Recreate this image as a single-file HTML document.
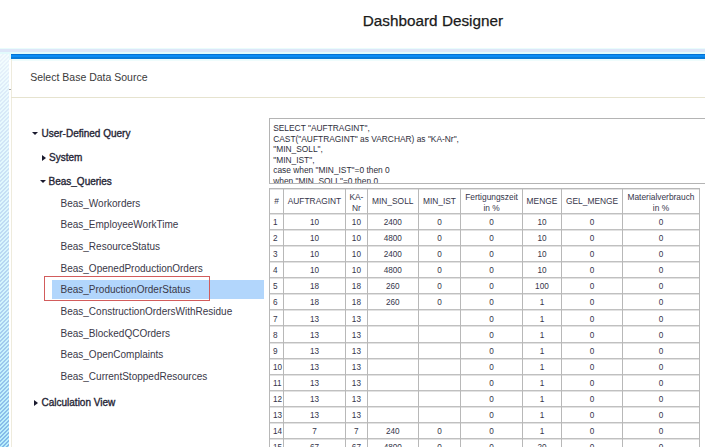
<!DOCTYPE html><html><head><meta charset="utf-8"><style>
*{margin:0;padding:0;box-sizing:border-box}
html,body{width:705px;height:447px;overflow:hidden;background:#fff;font-family:"Liberation Sans",sans-serif;position:relative}
.a{position:absolute;white-space:nowrap}
.title{left:362.8px;top:13px;font-size:15.3px;line-height:15px;color:#1a1a1a;-webkit-text-stroke:0.25px #1a1a1a}
.hatch{position:absolute;background-color:#a0e8f8;background-image:linear-gradient(rgba(255,255,255,0.88) 0%,rgba(255,255,255,0.78) 10%,rgba(255,255,255,0.5) 63%,rgba(255,255,255,0.22) 100%),repeating-linear-gradient(135deg,#a4eafa 0px,#a4eafa 1.6px,#5ea4e2 1.6px,#5ea4e2 2.83px)}
.htop{position:absolute;left:0;top:48px;width:705px;height:6px;background:linear-gradient(#e9fcfc 0,#e9fcfc 1.5px,#dde6f8 1.5px,#dde6f8 4.5px,#e2fafc 4.5px)}
.bar{position:absolute;left:11px;top:54px;width:694px;height:5px;background:linear-gradient(#0672d2 0,#0672d2 1px,#0a8cf6 1px,#0a8cf6 3.5px,#0a7ad8 3.5px)}
.bbelow{position:absolute;left:11px;top:59px;width:694px;height:2px;background:#eefcfc}
.vline{position:absolute;left:11px;top:59px;width:1px;height:388px;background:#eeebdd}
.hline{position:absolute;left:11px;top:97px;width:694px;height:1px;background:#e6e3cf}
.hdr{left:30.2px;top:71px;font-size:10.5px;line-height:12px;color:#3a3a3a}
.t{font-size:10px;line-height:12px;color:#3a3848}
.tb{font-size:10px;line-height:12px;color:#262636;-webkit-text-stroke:0.35px #262636}
.sel{position:absolute;left:52px;top:280px;width:212px;height:19px;background:#b2d6fc}
.red{position:absolute;left:44px;top:276px;width:166px;height:25px;border:1px solid #d25c5c}
.tri-d{position:absolute;width:0;height:0;border-left:3px solid transparent;border-right:3px solid transparent;border-top:3.5px solid #1a1a2e}
.tri-r{position:absolute;width:0;height:0;border-top:3px solid transparent;border-bottom:3px solid transparent;border-left:4px solid #1a1a2e}
.ta{position:absolute;left:269px;top:118px;width:460px;height:66px;border:1px solid #b4b4b4;overflow:hidden;background:#fff}
.ta div{position:absolute;left:3.2px;font-size:8.4px;line-height:10px;color:#2e2e3a;white-space:nowrap}
.cell{position:absolute;font-size:8.2px;line-height:9px;color:#35354a;text-align:center;white-space:nowrap}
.vl{position:absolute;width:1px;background:#b8b8b8}
.hl{position:absolute;height:1px;background:#c0c0c0;box-shadow:0 1px 0 #e2e2e2}
</style></head><body>
<div class="a title">Dashboard Designer</div>
<div class="htop"></div>
<div class="hatch" style="left:0;top:54px;width:9px;height:393px"></div>
<div style="position:absolute;left:9px;top:54px;width:2px;height:6px;background:#e8fafc"></div>
<div class="bar"></div><div class="bbelow"></div><div class="vline"></div><div class="hline"></div>
<div style="position:absolute;left:9px;top:89px;width:2px;height:1px;background:#aaa"></div>
<div class="a hdr">Select Base Data Source</div>
<div class="sel"></div>
<div class="tri-d" style="left:32px;top:131.5px"></div>
<div class="a tb" style="left:41.5px;top:127.5px">User-Defined Query</div>
<div class="tri-r" style="left:41.5px;top:155px"></div>
<div class="a tb" style="left:49px;top:151.5px">System</div>
<div class="tri-d" style="left:40px;top:179.5px"></div>
<div class="a tb" style="left:48.5px;top:175.5px">Beas_Queries</div>
<div class="a t" style="left:60.5px;top:197.50px">Beas_Workorders</div>
<div class="a t" style="left:60.5px;top:219.17px">Beas_EmployeeWorkTime</div>
<div class="a t" style="left:60.5px;top:240.84px">Beas_ResourceStatus</div>
<div class="a t" style="left:60.5px;top:262.51px">Beas_OpenedProductionOrders</div>
<div class="a t" style="left:60.5px;top:284.18px">Beas_ProductionOrderStatus</div>
<div class="a t" style="left:60.5px;top:305.85px">Beas_ConstructionOrdersWithResidue</div>
<div class="a t" style="left:60.5px;top:327.52px">Beas_BlockedQCOrders</div>
<div class="a t" style="left:60.5px;top:349.19px">Beas_OpenComplaints</div>
<div class="a t" style="left:60.5px;top:370.86px">Beas_CurrentStoppedResources</div>
<div class="red"></div>
<div class="tri-r" style="left:33.5px;top:399.5px"></div>
<div class="a tb" style="left:41.5px;top:396.5px">Calculation View</div>
<div class="ta">
<div style="top:4.00px">SELECT &quot;AUFTRAGINT&quot;,</div>
<div style="top:14.50px">CAST(&quot;AUFTRAGINT&quot; as VARCHAR) as &quot;KA-Nr&quot;,</div>
<div style="top:25.00px">&quot;MIN_SOLL&quot;,</div>
<div style="top:35.50px">&quot;MIN_IST&quot;,</div>
<div style="top:46.00px">case when &quot;MIN_IST&quot;=0 then 0</div>
<div style="top:56.50px">when &quot;MIN_SOLL&quot;=0 then 0</div>
</div>
<div style="position:absolute;left:269.5px;top:188.0px;width:429.8px;height:259.0px;background:#fff"></div>
<div class="hl" style="left:269.5px;top:187.5px;width:430.8px;background:#b8b8b8"></div>
<div class="hl" style="left:269px;top:213px;width:431px"></div>
<div class="hl" style="left:269px;top:229px;width:431px"></div>
<div class="hl" style="left:269px;top:245px;width:431px"></div>
<div class="hl" style="left:269px;top:261px;width:431px"></div>
<div class="hl" style="left:269px;top:277px;width:431px"></div>
<div class="hl" style="left:269px;top:293px;width:431px"></div>
<div class="hl" style="left:269px;top:309px;width:431px"></div>
<div class="hl" style="left:269px;top:325px;width:431px"></div>
<div class="hl" style="left:269px;top:342px;width:431px"></div>
<div class="hl" style="left:269px;top:358px;width:431px"></div>
<div class="hl" style="left:269px;top:374px;width:431px"></div>
<div class="hl" style="left:269px;top:390px;width:431px"></div>
<div class="hl" style="left:269px;top:406px;width:431px"></div>
<div class="hl" style="left:269px;top:422px;width:431px"></div>
<div class="hl" style="left:269px;top:438px;width:431px"></div>
<div class="hl" style="left:269px;top:454px;width:431px"></div>
<div class="vl" style="left:269px;top:188px;height:259px"></div>
<div class="vl" style="left:283px;top:188px;height:259px"></div>
<div class="vl" style="left:345px;top:188px;height:259px"></div>
<div class="vl" style="left:367px;top:188px;height:259px"></div>
<div class="vl" style="left:418px;top:188px;height:259px"></div>
<div class="vl" style="left:460px;top:188px;height:259px"></div>
<div class="vl" style="left:522px;top:188px;height:259px"></div>
<div class="vl" style="left:561px;top:188px;height:259px"></div>
<div class="vl" style="left:622px;top:188px;height:259px"></div>
<div class="vl" style="left:699px;top:188px;height:259px"></div>
<div class="cell" style="left:269.5px;width:14.0px;top:197.0px;font-size:8.4px">#</div>
<div class="cell" style="left:283.5px;width:62.0px;top:197.0px;font-size:8.4px">AUFTRAGINT</div>
<div class="cell" style="left:345.5px;width:21.8px;top:191.8px;line-height:10.7px;font-size:8.4px">KA-<br>Nr</div>
<div class="cell" style="left:367.3px;width:50.9px;top:197.0px;font-size:8.4px">MIN_SOLL</div>
<div class="cell" style="left:418.2px;width:42.5px;top:197.0px;font-size:8.4px">MIN_IST</div>
<div class="cell" style="left:460.7px;width:61.7px;top:191.8px;line-height:10.7px;font-size:8.4px">Fertigungszeit<br>in %</div>
<div class="cell" style="left:522.4px;width:39.1px;top:197.0px;font-size:8.4px">MENGE</div>
<div class="cell" style="left:561.5px;width:61.2px;top:197.0px;font-size:8.4px">GEL_MENGE</div>
<div class="cell" style="left:622.7px;width:76.6px;top:191.8px;line-height:10.7px;font-size:8.4px">Materialverbrauch<br>in %</div>
<div class="cell" style="left:273.0px;top:218.20px;text-align:left">1</div>
<div class="cell" style="left:283.5px;width:62.0px;top:218.20px">10</div>
<div class="cell" style="left:345.5px;width:21.8px;top:218.20px">10</div>
<div class="cell" style="left:367.3px;width:50.9px;top:218.20px">2400</div>
<div class="cell" style="left:418.2px;width:42.5px;top:218.20px">0</div>
<div class="cell" style="left:460.7px;width:61.7px;top:218.20px">0</div>
<div class="cell" style="left:522.4px;width:39.1px;top:218.20px">10</div>
<div class="cell" style="left:561.5px;width:61.2px;top:218.20px">0</div>
<div class="cell" style="left:622.7px;width:76.6px;top:218.20px">0</div>
<div class="cell" style="left:273.0px;top:234.25px;text-align:left">2</div>
<div class="cell" style="left:283.5px;width:62.0px;top:234.25px">10</div>
<div class="cell" style="left:345.5px;width:21.8px;top:234.25px">10</div>
<div class="cell" style="left:367.3px;width:50.9px;top:234.25px">4800</div>
<div class="cell" style="left:418.2px;width:42.5px;top:234.25px">0</div>
<div class="cell" style="left:460.7px;width:61.7px;top:234.25px">0</div>
<div class="cell" style="left:522.4px;width:39.1px;top:234.25px">10</div>
<div class="cell" style="left:561.5px;width:61.2px;top:234.25px">0</div>
<div class="cell" style="left:622.7px;width:76.6px;top:234.25px">0</div>
<div class="cell" style="left:273.0px;top:250.30px;text-align:left">3</div>
<div class="cell" style="left:283.5px;width:62.0px;top:250.30px">10</div>
<div class="cell" style="left:345.5px;width:21.8px;top:250.30px">10</div>
<div class="cell" style="left:367.3px;width:50.9px;top:250.30px">2400</div>
<div class="cell" style="left:418.2px;width:42.5px;top:250.30px">0</div>
<div class="cell" style="left:460.7px;width:61.7px;top:250.30px">0</div>
<div class="cell" style="left:522.4px;width:39.1px;top:250.30px">10</div>
<div class="cell" style="left:561.5px;width:61.2px;top:250.30px">0</div>
<div class="cell" style="left:622.7px;width:76.6px;top:250.30px">0</div>
<div class="cell" style="left:273.0px;top:266.35px;text-align:left">4</div>
<div class="cell" style="left:283.5px;width:62.0px;top:266.35px">10</div>
<div class="cell" style="left:345.5px;width:21.8px;top:266.35px">10</div>
<div class="cell" style="left:367.3px;width:50.9px;top:266.35px">4800</div>
<div class="cell" style="left:418.2px;width:42.5px;top:266.35px">0</div>
<div class="cell" style="left:460.7px;width:61.7px;top:266.35px">0</div>
<div class="cell" style="left:522.4px;width:39.1px;top:266.35px">10</div>
<div class="cell" style="left:561.5px;width:61.2px;top:266.35px">0</div>
<div class="cell" style="left:622.7px;width:76.6px;top:266.35px">0</div>
<div class="cell" style="left:273.0px;top:282.40px;text-align:left">5</div>
<div class="cell" style="left:283.5px;width:62.0px;top:282.40px">18</div>
<div class="cell" style="left:345.5px;width:21.8px;top:282.40px">18</div>
<div class="cell" style="left:367.3px;width:50.9px;top:282.40px">260</div>
<div class="cell" style="left:418.2px;width:42.5px;top:282.40px">0</div>
<div class="cell" style="left:460.7px;width:61.7px;top:282.40px">0</div>
<div class="cell" style="left:522.4px;width:39.1px;top:282.40px">100</div>
<div class="cell" style="left:561.5px;width:61.2px;top:282.40px">0</div>
<div class="cell" style="left:622.7px;width:76.6px;top:282.40px">0</div>
<div class="cell" style="left:273.0px;top:298.45px;text-align:left">6</div>
<div class="cell" style="left:283.5px;width:62.0px;top:298.45px">18</div>
<div class="cell" style="left:345.5px;width:21.8px;top:298.45px">18</div>
<div class="cell" style="left:367.3px;width:50.9px;top:298.45px">260</div>
<div class="cell" style="left:418.2px;width:42.5px;top:298.45px">0</div>
<div class="cell" style="left:460.7px;width:61.7px;top:298.45px">0</div>
<div class="cell" style="left:522.4px;width:39.1px;top:298.45px">1</div>
<div class="cell" style="left:561.5px;width:61.2px;top:298.45px">0</div>
<div class="cell" style="left:622.7px;width:76.6px;top:298.45px">0</div>
<div class="cell" style="left:273.0px;top:314.50px;text-align:left">7</div>
<div class="cell" style="left:283.5px;width:62.0px;top:314.50px">13</div>
<div class="cell" style="left:345.5px;width:21.8px;top:314.50px">13</div>
<div class="cell" style="left:367.3px;width:50.9px;top:314.50px"></div>
<div class="cell" style="left:418.2px;width:42.5px;top:314.50px"></div>
<div class="cell" style="left:460.7px;width:61.7px;top:314.50px">0</div>
<div class="cell" style="left:522.4px;width:39.1px;top:314.50px">1</div>
<div class="cell" style="left:561.5px;width:61.2px;top:314.50px">0</div>
<div class="cell" style="left:622.7px;width:76.6px;top:314.50px">0</div>
<div class="cell" style="left:273.0px;top:330.55px;text-align:left">8</div>
<div class="cell" style="left:283.5px;width:62.0px;top:330.55px">13</div>
<div class="cell" style="left:345.5px;width:21.8px;top:330.55px">13</div>
<div class="cell" style="left:367.3px;width:50.9px;top:330.55px"></div>
<div class="cell" style="left:418.2px;width:42.5px;top:330.55px"></div>
<div class="cell" style="left:460.7px;width:61.7px;top:330.55px">0</div>
<div class="cell" style="left:522.4px;width:39.1px;top:330.55px">1</div>
<div class="cell" style="left:561.5px;width:61.2px;top:330.55px">0</div>
<div class="cell" style="left:622.7px;width:76.6px;top:330.55px">0</div>
<div class="cell" style="left:273.0px;top:346.60px;text-align:left">9</div>
<div class="cell" style="left:283.5px;width:62.0px;top:346.60px">13</div>
<div class="cell" style="left:345.5px;width:21.8px;top:346.60px">13</div>
<div class="cell" style="left:367.3px;width:50.9px;top:346.60px"></div>
<div class="cell" style="left:418.2px;width:42.5px;top:346.60px"></div>
<div class="cell" style="left:460.7px;width:61.7px;top:346.60px">0</div>
<div class="cell" style="left:522.4px;width:39.1px;top:346.60px">1</div>
<div class="cell" style="left:561.5px;width:61.2px;top:346.60px">0</div>
<div class="cell" style="left:622.7px;width:76.6px;top:346.60px">0</div>
<div class="cell" style="left:273.0px;top:362.65px;text-align:left">10</div>
<div class="cell" style="left:283.5px;width:62.0px;top:362.65px">13</div>
<div class="cell" style="left:345.5px;width:21.8px;top:362.65px">13</div>
<div class="cell" style="left:367.3px;width:50.9px;top:362.65px"></div>
<div class="cell" style="left:418.2px;width:42.5px;top:362.65px"></div>
<div class="cell" style="left:460.7px;width:61.7px;top:362.65px">0</div>
<div class="cell" style="left:522.4px;width:39.1px;top:362.65px">1</div>
<div class="cell" style="left:561.5px;width:61.2px;top:362.65px">0</div>
<div class="cell" style="left:622.7px;width:76.6px;top:362.65px">0</div>
<div class="cell" style="left:273.0px;top:378.70px;text-align:left">11</div>
<div class="cell" style="left:283.5px;width:62.0px;top:378.70px">13</div>
<div class="cell" style="left:345.5px;width:21.8px;top:378.70px">13</div>
<div class="cell" style="left:367.3px;width:50.9px;top:378.70px"></div>
<div class="cell" style="left:418.2px;width:42.5px;top:378.70px"></div>
<div class="cell" style="left:460.7px;width:61.7px;top:378.70px">0</div>
<div class="cell" style="left:522.4px;width:39.1px;top:378.70px">1</div>
<div class="cell" style="left:561.5px;width:61.2px;top:378.70px">0</div>
<div class="cell" style="left:622.7px;width:76.6px;top:378.70px">0</div>
<div class="cell" style="left:273.0px;top:394.75px;text-align:left">12</div>
<div class="cell" style="left:283.5px;width:62.0px;top:394.75px">13</div>
<div class="cell" style="left:345.5px;width:21.8px;top:394.75px">13</div>
<div class="cell" style="left:367.3px;width:50.9px;top:394.75px"></div>
<div class="cell" style="left:418.2px;width:42.5px;top:394.75px"></div>
<div class="cell" style="left:460.7px;width:61.7px;top:394.75px">0</div>
<div class="cell" style="left:522.4px;width:39.1px;top:394.75px">1</div>
<div class="cell" style="left:561.5px;width:61.2px;top:394.75px">0</div>
<div class="cell" style="left:622.7px;width:76.6px;top:394.75px">0</div>
<div class="cell" style="left:273.0px;top:410.80px;text-align:left">13</div>
<div class="cell" style="left:283.5px;width:62.0px;top:410.80px">13</div>
<div class="cell" style="left:345.5px;width:21.8px;top:410.80px">13</div>
<div class="cell" style="left:367.3px;width:50.9px;top:410.80px"></div>
<div class="cell" style="left:418.2px;width:42.5px;top:410.80px"></div>
<div class="cell" style="left:460.7px;width:61.7px;top:410.80px">0</div>
<div class="cell" style="left:522.4px;width:39.1px;top:410.80px">1</div>
<div class="cell" style="left:561.5px;width:61.2px;top:410.80px">0</div>
<div class="cell" style="left:622.7px;width:76.6px;top:410.80px">0</div>
<div class="cell" style="left:273.0px;top:426.85px;text-align:left">14</div>
<div class="cell" style="left:283.5px;width:62.0px;top:426.85px">7</div>
<div class="cell" style="left:345.5px;width:21.8px;top:426.85px">7</div>
<div class="cell" style="left:367.3px;width:50.9px;top:426.85px">240</div>
<div class="cell" style="left:418.2px;width:42.5px;top:426.85px">0</div>
<div class="cell" style="left:460.7px;width:61.7px;top:426.85px">0</div>
<div class="cell" style="left:522.4px;width:39.1px;top:426.85px">1</div>
<div class="cell" style="left:561.5px;width:61.2px;top:426.85px">0</div>
<div class="cell" style="left:622.7px;width:76.6px;top:426.85px">0</div>
<div class="cell" style="left:273.0px;top:442.90px;text-align:left">15</div>
<div class="cell" style="left:283.5px;width:62.0px;top:442.90px">67</div>
<div class="cell" style="left:345.5px;width:21.8px;top:442.90px">67</div>
<div class="cell" style="left:367.3px;width:50.9px;top:442.90px">4800</div>
<div class="cell" style="left:418.2px;width:42.5px;top:442.90px">0</div>
<div class="cell" style="left:460.7px;width:61.7px;top:442.90px">0</div>
<div class="cell" style="left:522.4px;width:39.1px;top:442.90px">20</div>
<div class="cell" style="left:561.5px;width:61.2px;top:442.90px">0</div>
<div class="cell" style="left:622.7px;width:76.6px;top:442.90px">0</div>
</body></html>
